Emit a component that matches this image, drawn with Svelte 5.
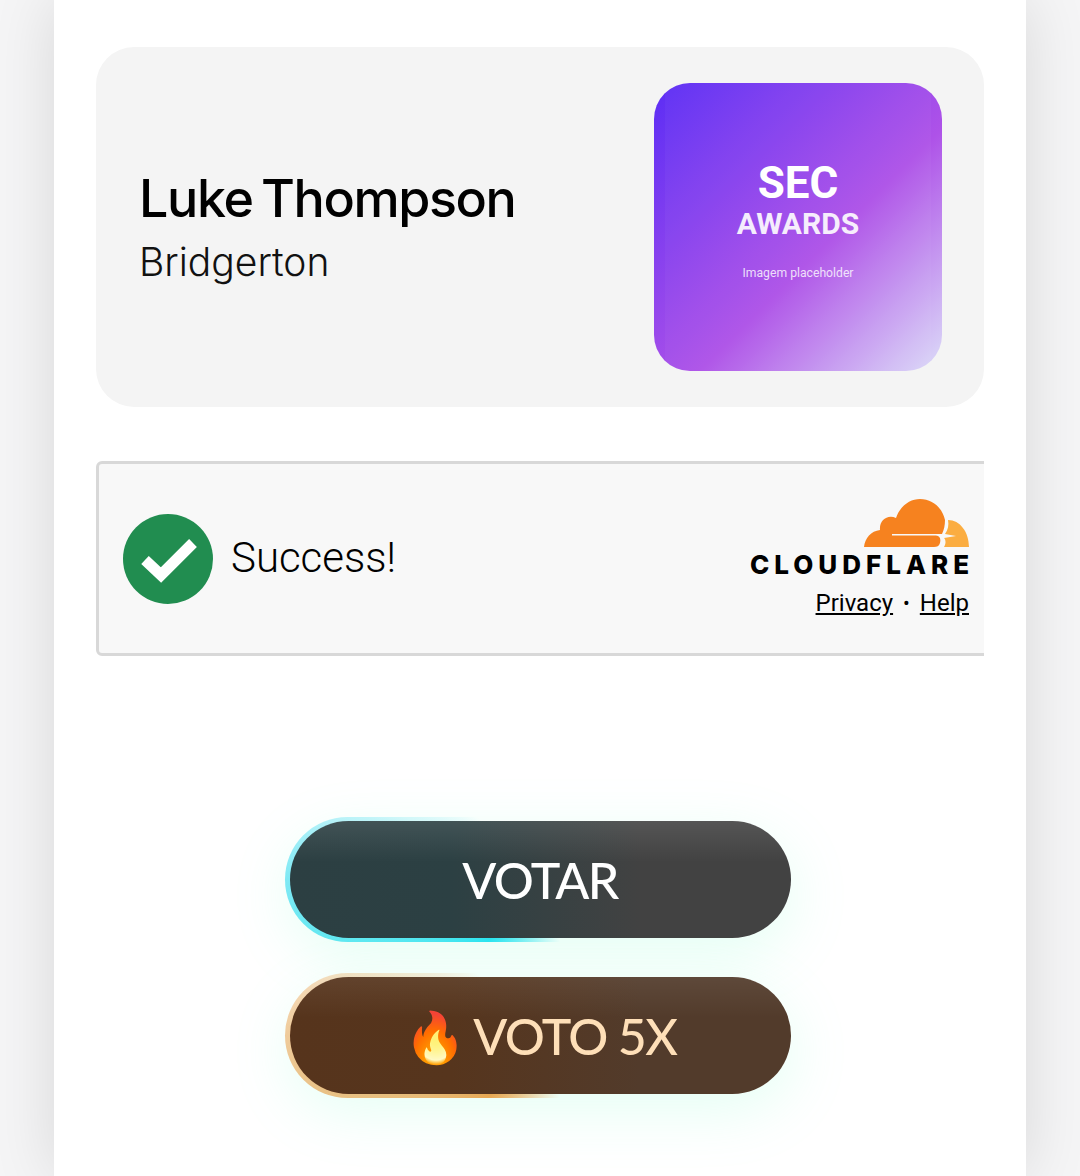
<script>
    const nominee = { name: 'Luke Thompson', show: 'Bridgerton' };
</script>

<div class="page">
    <main class="panel">
        <section class="nominee">
            <div class="info">
                <h1>{nominee.name}</h1>
                <p>{nominee.show}</p>
            </div>
            <div class="poster">
                <div class="sec">SEC</div>
                <div class="awards">AWARDS</div>
                <div class="note">Imagem placeholder</div>
            </div>
        </section>

        <section class="widget-slot">
            <div class="widget">
                <div class="status">
                    <svg class="check" viewBox="0 0 90 90" aria-hidden="true">
                        <circle cx="45" cy="45" r="45" fill="#218d50" />
                        <path d="M22 46l16 15 32-32" fill="none" stroke="#fff" stroke-width="11" />
                    </svg>
                    <span>Success!</span>
                </div>
                <div class="brand">
                    <svg class="cloud" viewBox="0 0 105 48" aria-hidden="true">
                        <path fill="#f6821f" d="M0 48C1 39 7 32 16 31 15 22 23 15 32 19 36 7 46 0 56 0 68 0 78 8 81 21 81 26 80 31 78 35L28 35 28 36.500 72 36.500C76 37 77 40 76 44 75 47 73 48 70 48Z" />
                        <path fill="#fbad41" d="M84 21C96 21 105 33 105 48L80 48C82 45 82 41 80 39L92 37 81 35C84 31 85 26 84 21Z" />
                    </svg>
                    <div class="wordmark">CLOUDFLARE</div>
                    <div class="links"><a href="#privacy">Privacy</a><span class="dot">•</span><a href="#help">Help</a></div>
                </div>
            </div>
        </section>

        <div class="actions">
            <button class="vote plain">VOTAR</button>
            <button class="vote boost"><span class="fire">🔥</span> VOTO 5X</button>
        </div>
    </main>
</div>

<style>
    :global(body) {
        margin: 0;
        background: #f5f5f6;
    }

    .page {
        height: 1176px;
        overflow: hidden;
    }

    .panel {
        width: 972px;
        height: 1176px;
        margin: 0 auto;
        padding: 47px 42px 0;
        box-sizing: border-box;
        background: #fff;
        box-shadow: 0 0 60px rgba(0, 0, 0, 0.12);
    }

    .nominee {
        display: flex;
        align-items: center;
        justify-content: space-between;
        height: 360px;
        padding: 0 42px 0 43px;
        box-sizing: border-box;
        border-radius: 38px;
        background: #f4f4f4;
    }

    .info h1 {
        margin: 0;
        font: 500 52px/62px Inter, sans-serif;
        letter-spacing: -1.4px;
        word-spacing: -4px;
        color: #000;
    }

    .info p {
        margin: 8px 0 0;
        font: 300 39px/48px Inter, sans-serif;
        color: #111;
    }

    .poster {
        position: relative;
        display: flex;
        flex-direction: column;
        align-items: center;
        width: 288px;
        height: 288px;
        padding-top: 76px;
        box-sizing: border-box;
        border-radius: 36px;
        background: linear-gradient(135deg, #5b2df5 0%, #ae52e8 58%, #dcdcf8 100%);
        color: #fff;
        font-family: Roboto, sans-serif;
    }

    .poster::after {
        content: '';
        position: absolute;
        inset: 0 11px;
        background: rgba(255, 255, 255, 0.03);
    }

    .sec {
        font-size: 44px;
        font-weight: 700;
        line-height: 48px;
    }

    .awards {
        font-size: 30px;
        font-weight: 700;
        line-height: 34px;
        opacity: 0.9;
    }

    .note {
        margin-top: 25px;
        font-size: 12.200px;
        line-height: 14px;
        opacity: 0.8;
    }

    .widget-slot {
        margin-top: 54px;
        overflow: hidden;
    }

    .widget {
        display: flex;
        align-items: center;
        justify-content: space-between;
        width: 900px;
        height: 195px;
        padding: 0 15px 0 24px;
        box-sizing: border-box;
        border: 3px solid #d8d8d8;
        border-radius: 6px;
        background: #f8f8f8;
        font-family: Roboto, sans-serif;
        color: #000;
    }

    .status {
        display: flex;
        align-items: center;
        gap: 18px;
        font-size: 42px;
        font-weight: 300;
    }

    .status span {
        position: relative;
        top: -1px;
    }

    .check {
        display: block;
        width: 90px;
        height: 90px;
    }

    .brand {
        display: flex;
        flex-direction: column;
        align-items: flex-end;
        margin-right: 9px;
    }

    .cloud {
        display: block;
        width: 105px;
        height: 48px;
        margin-top: -1px;
    }

    .wordmark {
        margin-top: 6px;
        font: 800 26px/24px Inter, sans-serif;
        letter-spacing: 5px;
        margin-right: -5px;
    }

    .links {
        display: flex;
        align-items: center;
        gap: 10px;
        margin-top: 11px;
        font-size: 24px;
        line-height: 30px;
    }

    .links a {
        color: #000;
    }

    .dot {
        font-size: 20px;
    }

    .actions {
        display: flex;
        flex-direction: column;
        align-items: center;
        gap: 39px;
        margin-top: 165px;
        isolation: isolate;
    }

    .vote {
        position: relative;
        width: 501px;
        height: 117px;
        border: none;
        border-radius: 59px;
        font: 500 50px/1 Lato, sans-serif;
        letter-spacing: -1.600px;
    }

    .vote::before {
        content: '';
        position: absolute;
        inset: -4px -4px -4px -5px;
        z-index: -1;
        border-radius: 63px;
    }

    .plain {
        color: #fff;
        background:
            linear-gradient(to bottom, rgba(255, 255, 255, 0.1), transparent 35%),
            linear-gradient(to right, #2c3f42 0%, #2c4043 32%, #424242 70%);
        box-shadow: 0 16px 60px rgba(120, 255, 200, 0.2);
    }

    .plain::before {
        background: conic-gradient(#fff 162deg, #1fe0f5 220deg, #80e8f8 270deg, #d8f8fc 295deg, #fff 315deg);
    }

    .boost {
        color: #fedfb8;
        background:
            linear-gradient(to bottom, rgba(255, 255, 255, 0.07), transparent 35%),
            linear-gradient(to right, #56341c 0%, #56351d 32%, #523b2b 70%);
        box-shadow: 0 16px 60px rgba(120, 255, 200, 0.2);
    }

    .boost::before {
        background: conic-gradient(#fff 162deg, #f99a40 220deg, #f8c898 270deg, #fde8d4 295deg, #fff 315deg);
    }
</style>
